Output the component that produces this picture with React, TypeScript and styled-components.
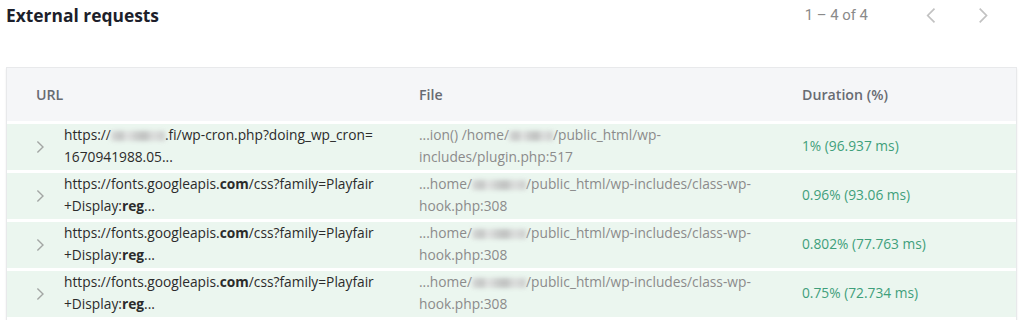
import React from 'react';
import styled, { createGlobalStyle } from 'styled-components';

const GlobalStyle = createGlobalStyle`
    body {
        margin: 0;
        background: #ffffff;
        font-family: 'Open Sans', 'Liberation Sans', sans-serif;
    }
`;

const Page = styled.div`
    padding: 3px 7px 0 6px;
`;

const TopBar = styled.header`
    display: flex;
    align-items: center;
    justify-content: space-between;
    height: 24px;
`;

const Title = styled.h2`
    margin: 0;
    font-size: 17.4px;
    font-weight: 700;
    color: #1d1f2b;
`;

const Pager = styled.div`
    display: flex;
    align-items: center;
    margin-right: 14px;
`;

const PagerText = styled.span`
    font-family: Roboto, 'Liberation Sans', sans-serif;
    font-size: 14.9px;
    color: #8a8a8a;
    margin-right: 43px;
`;

const PagerButton = styled.button`
    width: 40px;
    height: 24px;
    padding: 0;
    border: 0;
    background: none;
    display: flex;
    align-items: center;
    justify-content: center;
    & + & {
        margin-left: 12px;
    }
`;

const Panel = styled.section`
    margin-top: 40px;
    border: 1px solid #e8e9eb;
    border-bottom: 0;
    background: #ffffff;
    box-shadow: 0 2px 2px rgba(0, 0, 0, 0.08);
    padding-bottom: 3px;
`;

const HeadRow = styled.div`
    display: grid;
    grid-template-columns: 57px 355px 383px 1fr;
    align-items: center;
    height: 53px;
    background: #f5f6f8;
    font-size: 14.2px;
    font-weight: 600;
    color: #686b72;
`;

const HeadCell = styled.div<{ $span?: number; $pad?: number }>`
    grid-column: span ${({ $span }) => $span || 1};
    padding-left: ${({ $pad }) => $pad || 0}px;
`;

const Row = styled.div`
    display: grid;
    grid-template-columns: 57px 355px 383px 1fr;
    align-items: center;
    height: 46px;
    margin-top: 3px;
    background: #ebf6ef;
    font-size: 13.75px;
    line-height: 22px;
`;

const Toggle = styled.div`
    display: flex;
    justify-content: flex-start;
    padding-left: 29px;
`;

const UrlCell = styled.div`
    color: #2b2b2b;
    white-space: nowrap;
    margin-top: -2px;
`;

const FileCell = styled.div`
    color: #8b8b8b;
    white-space: nowrap;
    margin-top: -2px;
`;

const DurationCell = styled.div`
    color: #3f9f7b;
    white-space: nowrap;
    margin-top: -2px;
`;

const Line = styled.div`
    display: block;
`;

const Blur = styled.span<{ $w: number }>`
    display: inline-block;
    width: ${({ $w }) => $w}px;
    height: 10px;
    vertical-align: -1px;
    background: linear-gradient(
        90deg,
        #d6d6d6 0%,
        #bdbdbd 18%,
        #e0e0e0 30%,
        #c4c4c4 48%,
        #b8b8b8 62%,
        #dadada 78%,
        #c8c8c8 100%
    );
    filter: blur(2px);
    opacity: 0.85;
`;

const Chevron = ({ dir, color, size }: { dir: 'left' | 'right'; color: string; size: number }) => (
    <svg width={size * 0.6} height={size} viewBox="0 0 9 15" fill="none">
        <path
            d={dir === 'right' ? 'M1.5 1.5 L7.5 7.5 L1.5 13.5' : 'M7.5 1.5 L1.5 7.5 L7.5 13.5'}
            stroke={color}
            strokeWidth="1.5"
        />
    </svg>
);

type Req = {
    url: React.ReactNode[];
    file: React.ReactNode[];
    duration: string;
};

const fontsUrl = [
    <>
        https://fonts.googleapis.<b>com</b>/css?family=Playfair
    </>,
    <>
        +Display:<b>reg</b>...
    </>,
];

const hookFile = (w: number) => [
    <>
        ...home/<Blur $w={w} />/public_html/wp-includes/class-wp-
    </>,
    <>hook.php:308</>,
];

const requests: Req[] = [
    {
        url: [
            <>
                https://<Blur $w={54} />.fi/wp-cron.php?doing_wp_cron=
            </>,
            <>1670941988.05...</>,
        ],
        file: [
            <>
                ...ion() /home/<Blur $w={44} />/public_html/wp-
            </>,
            <>includes/plugin.php:517</>,
        ],
        duration: '1% (96.937 ms)',
    },
    { url: fontsUrl, file: hookFile(54), duration: '0.96% (93.06 ms)' },
    { url: fontsUrl, file: hookFile(54), duration: '0.802% (77.763 ms)' },
    { url: fontsUrl, file: hookFile(54), duration: '0.75% (72.734 ms)' },
];

const App = () => {
    return (
        <Page>
            <GlobalStyle />
            <TopBar>
                <Title>External requests</Title>
                <Pager>
                    <PagerText>1 – 4 of 4</PagerText>
                    <PagerButton aria-label="previous page">
                        <Chevron dir="left" color="#c2c2c2" size={17} />
                    </PagerButton>
                    <PagerButton aria-label="next page">
                        <Chevron dir="right" color="#c2c2c2" size={17} />
                    </PagerButton>
                </Pager>
            </TopBar>
            <Panel>
                <HeadRow>
                    <HeadCell $span={2} $pad={29}>URL</HeadCell>
                    <HeadCell>File</HeadCell>
                    <HeadCell>Duration (%)</HeadCell>
                </HeadRow>
                {requests.map((req, i) => (
                    <Row key={i}>
                        <Toggle>
                            <Chevron dir="right" color="#a3a6a4" size={14} />
                        </Toggle>
                        <UrlCell>
                            {req.url.map((l, j) => (
                                <Line key={j}>{l}</Line>
                            ))}
                        </UrlCell>
                        <FileCell>
                            {req.file.map((l, j) => (
                                <Line key={j}>{l}</Line>
                            ))}
                        </FileCell>
                        <DurationCell>{req.duration}</DurationCell>
                    </Row>
                ))}
            </Panel>
        </Page>
    );
};

export default App;
